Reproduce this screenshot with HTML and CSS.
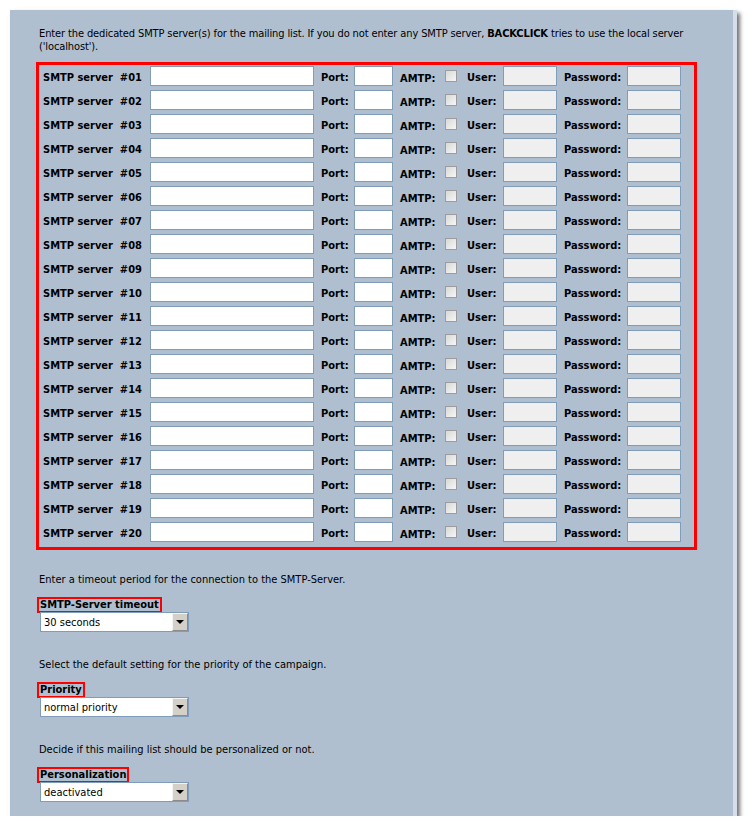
FILE: index.html
```html
<!DOCTYPE html>
<html lang="en">
<head>
    <meta charset="UTF-8">
    <title>Mailing list - SMTP settings</title>
    <link rel="stylesheet" href="styles.css">
</head>
<body>
    <div class="panel">
        <p class="intro">Enter the dedicated SMTP server(s) for the mailing list. If you do not enter any SMTP server, <b>BACKCLICK</b> tries to use the local server ('localhost').</p>

        <div class="smtp-box" id="smtp-grid"></div>

        <div class="setting">
            <p>Enter a timeout period for the connection to the SMTP-Server.</p>
            <label class="mark" for="timeout">SMTP-Server timeout</label>
            <div class="select-wrap">
                <select id="timeout">
                    <option>30 seconds</option>
                    <option>60 seconds</option>
                </select>
            </div>
        </div>

        <div class="setting">
            <p>Select the default setting for the priority of the campaign.</p>
            <label class="mark" for="priority">Priority</label>
            <div class="select-wrap">
                <select id="priority">
                    <option>normal priority</option>
                    <option>high priority</option>
                </select>
            </div>
        </div>

        <div class="setting">
            <p>Decide if this mailing list should be personalized or not.</p>
            <label class="mark" for="personal">Personalization</label>
            <div class="select-wrap">
                <select id="personal">
                    <option>deactivated</option>
                    <option>activated</option>
                </select>
            </div>
        </div>
    </div>

    <script>
        var grid = document.getElementById("smtp-grid");
        var html = "";
        for (var i = 1; i <= 20; i++) {
            var n = i < 10 ? "0" + i : "" + i;
            html += '<span class="lbl">SMTP server&nbsp; #' + n + '</span>' +
                '<input type="text" class="server">' +
                '<span class="lbl gap">Port:</span>' +
                '<input type="text" class="port">' +
                '<span class="lbl gap amtp">AMTP:</span>' +
                '<input type="checkbox" class="check">' +
                '<span class="lbl">User:</span>' +
                '<input type="text" class="off" disabled>' +
                '<span class="lbl gap">Password:</span>' +
                '<input type="password" class="off" disabled>';
        }
        grid.innerHTML = html;
    </script>
</body>
</html>
```

FILE: styles.css
```css
body {
    margin: 0;
    background: #ffffff;
    font-family: "DejaVu Sans Condensed", "Liberation Sans", sans-serif;
    font-size: 11px;
    color: #000000;
}

.panel {
    margin: 10px 0 0 10px;
    width: 727px;
    padding: 17px 0 14px 26px;
    box-sizing: border-box;
    background: #afbfd0;
    border-right: 4px solid #d6dfe9;
    box-shadow: 3px 3px 4px rgba(0, 0, 0, 0.55);
}

p {
    margin: 0;
    line-height: 13px;
}

.intro {
    margin-left: 3px;
    width: 660px;
    letter-spacing: -0.12px;
}

.smtp-box {
    margin-top: 9px;
    width: 661px;
    box-sizing: border-box;
    border: 3px solid #ff0000;
    padding: 1px 0 5px 4px;
    display: grid;
    grid-template-columns: 107px 164px 40px 39px 52px 22px 36px 54px 70px 54px;
    grid-auto-rows: 20px;
    row-gap: 4px;
}

.smtp-box .lbl {
    font-weight: bold;
    align-self: center;
    padding-top: 2px;
    white-space: nowrap;
}

.smtp-box .gap {
    padding-left: 7px;
}

.smtp-box .amtp {
    padding-top: 5px;
}

.smtp-box input[type=text],
.smtp-box input[type=password] {
    height: 20px;
    box-sizing: border-box;
    margin: 0;
    padding: 0 2px;
    border: 1px solid #7f9db9;
    background: #ffffff;
    font: inherit;
}

.smtp-box input.server {
    width: 164px;
}

.smtp-box input.port {
    width: 39px;
}

.smtp-box input.off {
    width: 54px;
    background: #efefef;
}

.smtp-box .check {
    appearance: none;
    -webkit-appearance: none;
    width: 12px;
    height: 12px;
    margin: 4px 0 0 0;
    border: 1px solid #9c9c9c;
    box-sizing: border-box;
    background: linear-gradient(135deg, #d8d8d8, #f6f6f6);
}

.setting {
    margin-top: 23px;
}

.setting + .setting {
    margin-top: 26px;
}

.setting p {
    margin-left: 3px;
}

.mark {
    display: inline-block;
    margin: 11px 0 0 1px;
    padding: 0 1px;
    border: 2px solid #ff0000;
    font-weight: bold;
    line-height: 12px;
    height: 12px;
}

.select-wrap {
    position: relative;
    margin: -1px 0 0 4px;
    width: 149px;
    height: 20px;
}

.select-wrap select {
    appearance: none;
    -webkit-appearance: none;
    display: block;
    width: 149px;
    height: 20px;
    margin: 0;
    padding: 0 0 0 3px;
    border: 1px solid #7f9db9;
    border-radius: 0;
    background: #ffffff;
    font: inherit;
    color: #000000;
}

.select-wrap::after {
    content: "";
    position: absolute;
    top: 1px;
    right: 1px;
    width: 16px;
    height: 18px;
    box-sizing: border-box;
    border: 1px solid #8c8c8c;
    border-top-color: #f4f4f4;
    border-left-color: #f4f4f4;
    background: #d4d0c8;
    pointer-events: none;
}

.select-wrap::before {
    content: "";
    position: absolute;
    top: 8px;
    right: 5px;
    width: 0;
    height: 0;
    border-left: 4px solid transparent;
    border-right: 4px solid transparent;
    border-top: 4px solid #000000;
    z-index: 1;
    pointer-events: none;
}
```
